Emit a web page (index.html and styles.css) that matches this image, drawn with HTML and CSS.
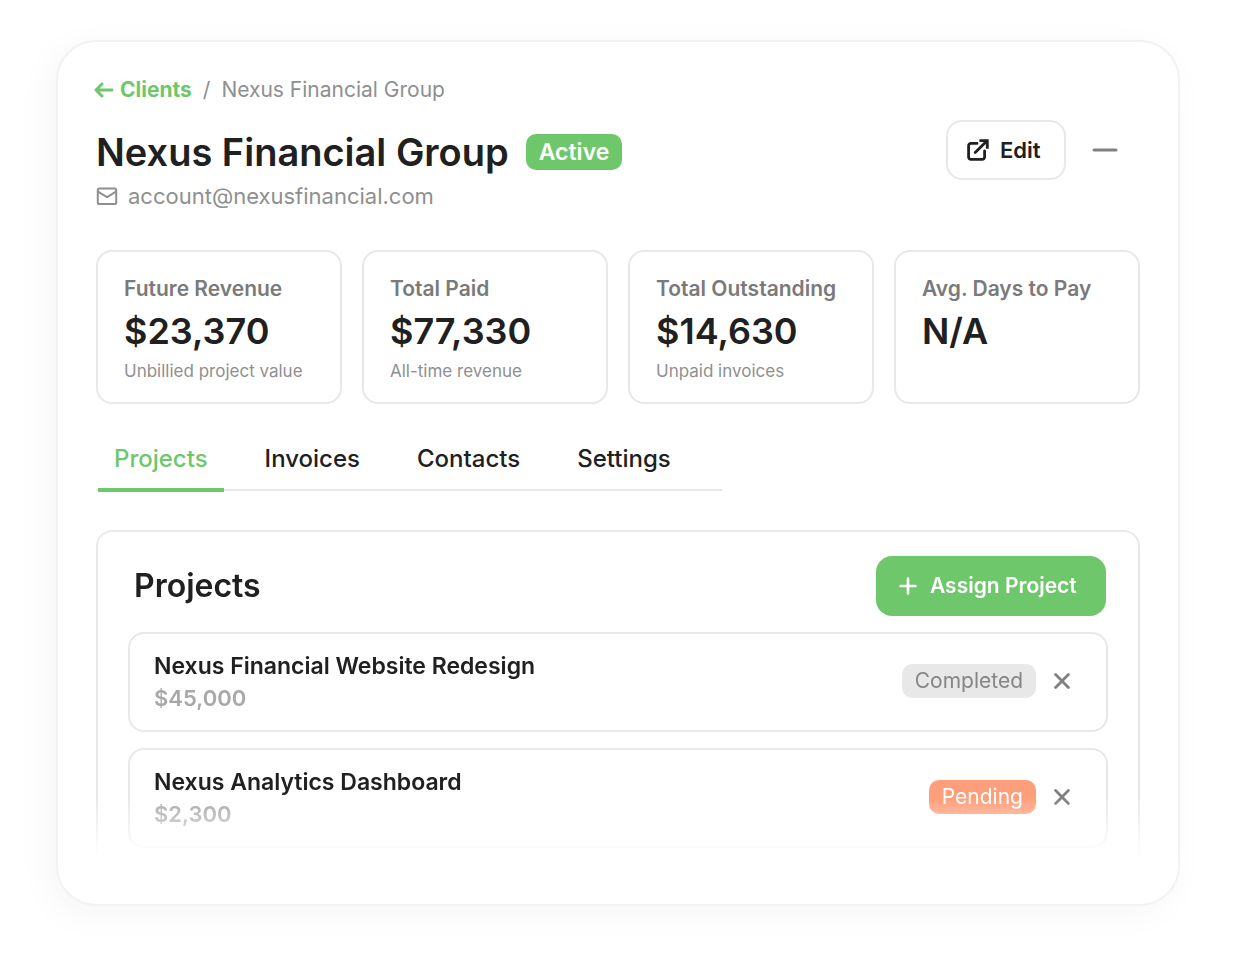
FILE: index.html
```html
<!DOCTYPE html>
<html lang="en">
<head>
  <meta charset="utf-8">
  <meta name="viewport" content="width=device-width, initial-scale=1">
  <title>Nexus Financial Group</title>
  <link rel="stylesheet" href="styles.css">
</head>
<body>
  <main class="card">
    <nav class="crumbs" aria-label="Breadcrumb">
      <a class="crumbs-back" href="#clients">
        <svg width="20" height="16" viewBox="0 0 20 16" fill="none" stroke="currentColor" stroke-width="3" stroke-linecap="round" stroke-linejoin="round" aria-hidden="true"><path d="M18 8H2.2M8 2L2 8l6 6"/></svg>
        Clients
      </a>
      <span class="crumbs-sep">/</span>
      <span>Nexus Financial Group</span>
    </nav>

    <header class="head">
      <div class="head-info">
        <div class="head-title">
          <h1>Nexus Financial Group</h1>
          <span class="badge badge-active">Active</span>
        </div>
        <a class="email" href="mailto:account@nexusfinancial.com">
          <svg width="22" height="18" viewBox="0 0 22 18" fill="none" stroke="currentColor" stroke-width="2" stroke-linecap="round" stroke-linejoin="round" aria-hidden="true"><rect x="1.8" y="1.6" width="18.4" height="15.4" rx="1.6"/><path d="M2 4.6l9 5.6 9-5.6"/></svg>
          account@nexusfinancial.com
        </a>
      </div>
      <div class="head-actions">
        <button class="edit" type="button">
          <svg width="22" height="22" viewBox="0 0 22 22" fill="none" stroke="currentColor" stroke-width="2.8" aria-hidden="true"><path d="M10 4.4H4A2.4 2.4 0 0 0 1.6 6.8V18A2.4 2.4 0 0 0 4 20.4H15.2A2.4 2.4 0 0 0 17.6 18V12" stroke-linecap="round"/><path d="M8.2 13.6L19.6 2.2" stroke-linecap="round"/><path d="M12.4 1.7h7.9v8"/></svg>
          Edit
        </button>
        <button class="minimize" type="button" aria-label="Minimize">
          <svg width="26" height="4" viewBox="0 0 26 4" stroke="currentColor" stroke-width="3" stroke-linecap="round" aria-hidden="true"><path d="M2 2h22"/></svg>
        </button>
      </div>
    </header>

    <section class="stats" aria-label="Summary">
      <div class="stat">
        <p class="stat-label">Future Revenue</p>
        <p class="stat-value">$23,370</p>
        <p class="stat-note">Unbillied project value</p>
      </div>
      <div class="stat">
        <p class="stat-label">Total Paid</p>
        <p class="stat-value">$77,330</p>
        <p class="stat-note">All-time revenue</p>
      </div>
      <div class="stat">
        <p class="stat-label">Total Outstanding</p>
        <p class="stat-value">$14,630</p>
        <p class="stat-note">Unpaid invoices</p>
      </div>
      <div class="stat">
        <p class="stat-label">Avg. Days to Pay</p>
        <p class="stat-value">N/A</p>
      </div>
    </section>

    <div class="tabs" role="tablist">
      <button class="tab tab-current" type="button" role="tab" aria-selected="true">Projects</button>
      <button class="tab" type="button" role="tab" aria-selected="false">Invoices</button>
      <button class="tab" type="button" role="tab" aria-selected="false">Contacts</button>
      <button class="tab" type="button" role="tab" aria-selected="false">Settings</button>
    </div>

    <section class="panel">
      <div class="panel-head">
        <h2>Projects</h2>
        <button class="assign" type="button">
          <svg width="18" height="18" viewBox="0 0 18 18" stroke="currentColor" stroke-width="2.6" stroke-linecap="round" aria-hidden="true"><path d="M9 1.6v14.8M1.6 9h14.8"/></svg>
          Assign Project
        </button>
      </div>
      <ul class="projects">
        <li class="project">
          <div class="project-info">
            <h3>Nexus Financial Website Redesign</h3>
            <p>$45,000</p>
          </div>
          <div class="project-actions">
            <span class="badge badge-completed">Completed</span>
            <button class="remove" type="button" aria-label="Remove Nexus Financial Website Redesign">
              <svg width="16" height="16" viewBox="0 0 16 16" stroke="currentColor" stroke-width="2.8" stroke-linecap="round" aria-hidden="true"><path d="M1.6 1.6l12.8 12.8M14.4 1.6L1.6 14.4"/></svg>
            </button>
          </div>
        </li>
        <li class="project">
          <div class="project-info">
            <h3>Nexus Analytics Dashboard</h3>
            <p>$2,300</p>
          </div>
          <div class="project-actions">
            <span class="badge badge-pending">Pending</span>
            <button class="remove" type="button" aria-label="Remove Nexus Analytics Dashboard">
              <svg width="16" height="16" viewBox="0 0 16 16" stroke="currentColor" stroke-width="2.8" stroke-linecap="round" aria-hidden="true"><path d="M1.6 1.6l12.8 12.8M14.4 1.6L1.6 14.4"/></svg>
            </button>
          </div>
        </li>
      </ul>
    </section>
  </main>
</body>
</html>
```
FILE: styles.css
```css
:root {
  --green: #6fc76b;
  --ink: #202020;
  --muted: #8f8f8f;
  --line: #e8e8e8;
}

* {
  box-sizing: border-box;
}

body {
  margin: 0;
  padding: 40px 56px 56px;
  background: #fff;
  color: var(--ink);
  font-family: Inter, "Open Sans", sans-serif;
  font-size: 22px;
  line-height: 32px;
}

h1,
h2,
h3,
p,
ul {
  margin: 0;
  padding: 0;
}

button {
  padding: 0;
  border: 0;
  background: none;
  color: inherit;
  font: inherit;
  cursor: pointer;
}

a {
  color: inherit;
  text-decoration: none;
}

svg {
  flex: none;
}

.card {
  padding: 32px 38px 46px;
  border: 2px solid #f2f2f2;
  border-radius: 40px;
  background: #fff;
  box-shadow: -8px 8px 36px rgba(0, 0, 0, 0.04);
}

.crumbs {
  display: flex;
  gap: 11px;
  color: var(--muted);
  font-size: 21px;
}

.crumbs-back {
  display: flex;
  align-items: center;
  gap: 6px;
  margin-left: -2px;
  color: var(--green);
  font-weight: 700;
}

.head {
  display: flex;
  align-items: flex-start;
  justify-content: space-between;
  margin-top: 14px;
}

.head-info {
  padding-top: 8px;
}

.head-title {
  display: flex;
  align-items: center;
  gap: 17px;
}

h1 {
  font-size: 38px;
  line-height: 48px;
  font-weight: 600;
}

.badge {
  padding: 0 13px;
  border-radius: 10px;
  font-size: 21px;
  line-height: 34px;
}

.badge-active {
  background: var(--green);
  color: #fff;
  font-size: 23px;
  line-height: 36px;
  font-weight: 600;
}

.badge-completed {
  background: #e8e8e8;
  color: #858585;
}

.badge-pending {
  background: #ff9e7a;
  color: #fff;
}

.email {
  display: flex;
  align-items: center;
  gap: 10px;
  margin-top: 4px;
  color: var(--muted);
}

.head-actions {
  display: flex;
  align-items: center;
  gap: 4px;
}

.edit {
  display: flex;
  align-items: center;
  gap: 11px;
  min-width: 120px;
  height: 60px;
  padding: 0 20px 0 19px;
  border: 2px solid var(--line);
  border-radius: 16px;
  font-weight: 600;
}

.minimize {
  display: grid;
  place-items: center;
  width: 70px;
  height: 60px;
  color: #808080;
}

.stats {
  display: grid;
  grid-template-columns: repeat(4, 1fr);
  gap: 20px;
  margin-top: 38px;
}

.stat {
  display: flex;
  flex-direction: column;
  gap: 2px;
  padding: 21px 20px 17px 26px;
  border: 2px solid var(--line);
  border-radius: 16px;
  white-space: nowrap;
}

.stat-label {
  color: #7a7a7a;
  font-size: 21px;
  font-weight: 600;
}

.stat-value {
  font-size: 36px;
  line-height: 48px;
  font-weight: 600;
}

.stat-note {
  color: var(--muted);
  font-size: 17px;
  line-height: 28px;
}

.tabs {
  display: flex;
  gap: 25px;
  width: 60%;
  margin-top: 24px;
  padding-left: 2px;
  border-bottom: 2px solid var(--line);
}

.tab {
  position: relative;
  height: 61px;
  padding: 0 16px;
  font-size: 24px;
  font-weight: 500;
}

.tab-current {
  color: var(--green);
}

.tab-current::after {
  content: "";
  position: absolute;
  right: 0;
  bottom: -3px;
  left: 0;
  height: 4px;
  background: var(--green);
}

.panel {
  margin-top: 39px;
  padding: 24px 30px 10px;
  border: 2px solid var(--line);
  border-bottom: 0;
  border-radius: 16px 16px 0 0;
  mask-image: linear-gradient(to top, transparent, #000 60px);
}

.panel-head {
  display: flex;
  align-items: center;
  justify-content: space-between;
  padding: 0 2px 0 6px;
}

h2 {
  font-size: 32px;
  line-height: 40px;
  font-weight: 600;
}

.assign {
  display: flex;
  align-items: center;
  gap: 13px;
  min-width: 230px;
  height: 60px;
  padding: 0 23px;
  border-radius: 16px;
  background: var(--green);
  color: #fff;
  font-size: 21px;
  font-weight: 600;
}

.projects {
  display: grid;
  gap: 16px;
  margin-top: 16px;
  list-style: none;
}

.project {
  display: flex;
  align-items: center;
  justify-content: space-between;
  padding: 16px 24px;
  border: 2px solid var(--line);
  border-radius: 16px;
}

.project-actions {
  display: flex;
  align-items: center;
  gap: 6px;
  padding-bottom: 3px;
}

h3 {
  font-size: 23px;
  line-height: 32px;
  font-weight: 600;
}

.project-info p {
  color: #a8a8a8;
  font-weight: 600;
}

.remove {
  display: grid;
  place-items: center;
  width: 40px;
  height: 40px;
  color: #808080;
}
```
